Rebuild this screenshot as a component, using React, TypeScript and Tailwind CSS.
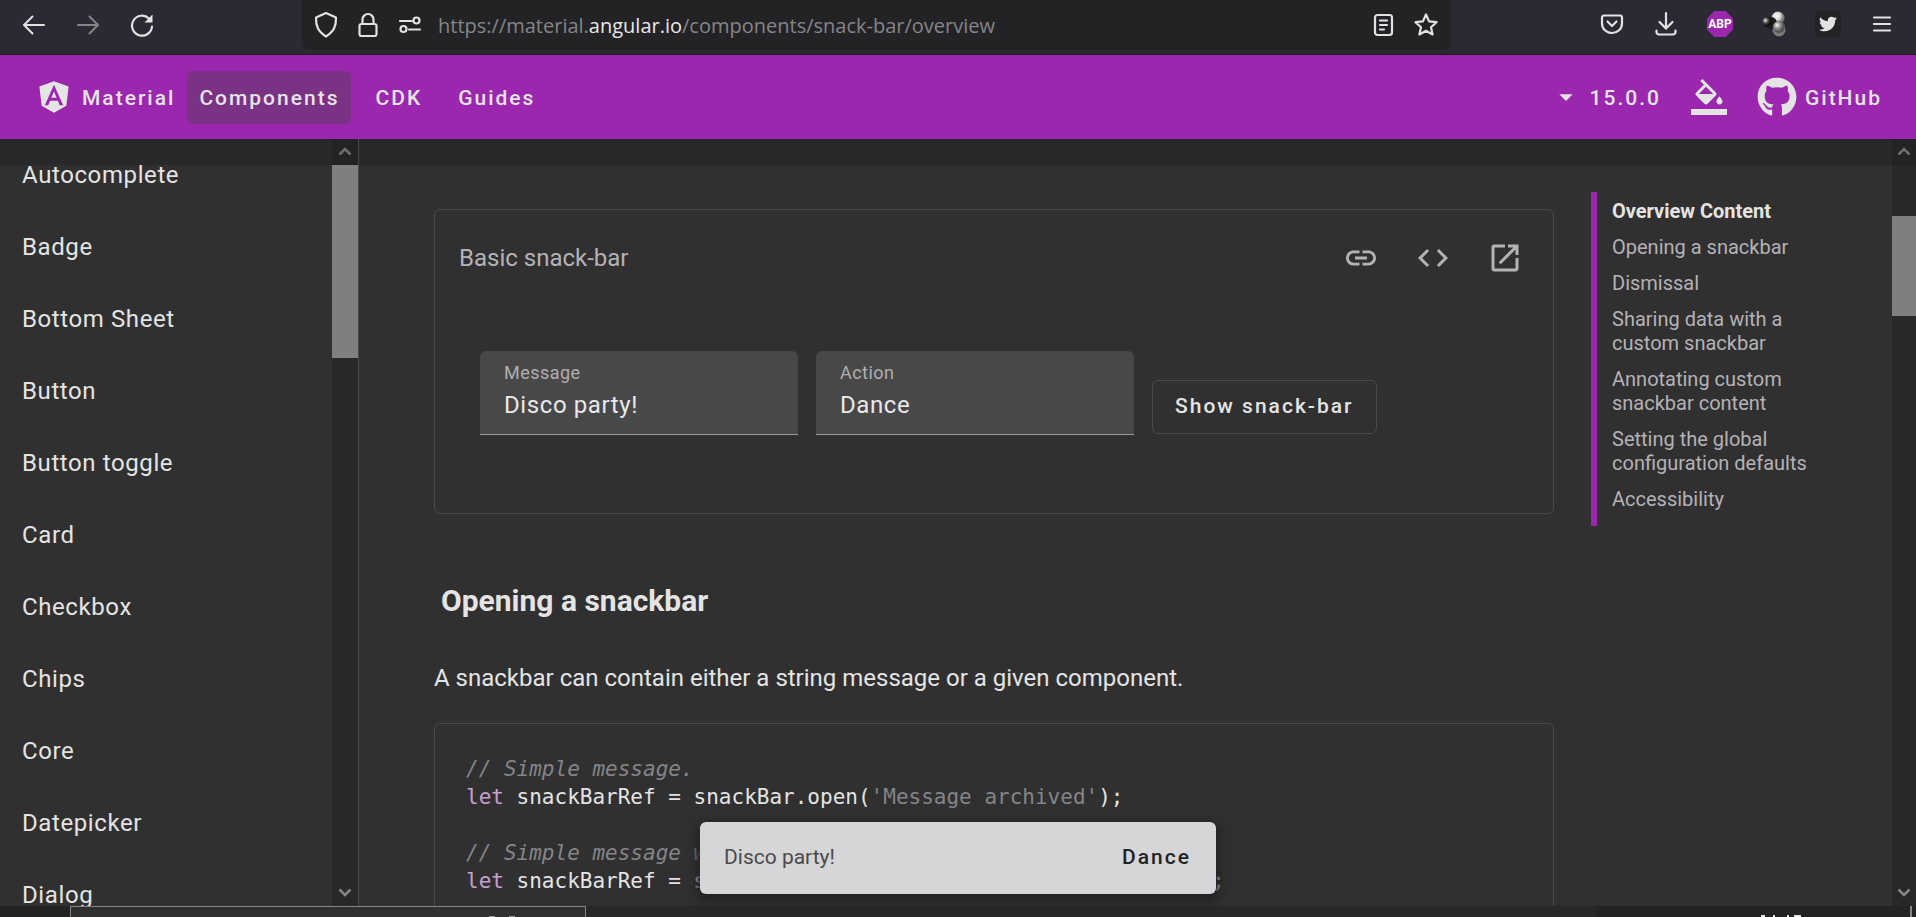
import { MdLink, MdCode, MdOpenInNew, MdArrowDropDown } from "react-icons/md";
import { FaAngular, FaGithub, FaTwitter } from "react-icons/fa";

const NAV_ITEMS = [
  "Autocomplete",
  "Badge",
  "Bottom Sheet",
  "Button",
  "Button toggle",
  "Card",
  "Checkbox",
  "Chips",
  "Core",
  "Datepicker",
  "Dialog",
];

const TOC_ITEMS = [
  "Opening a snackbar",
  "Dismissal",
  "Sharing data with a custom snackbar",
  "Annotating custom snackbar content",
  "Setting the global configuration defaults",
  "Accessibility",
];

const iconButton = "flex items-center justify-center";

function BrowserBar() {
  return (
    <div className="flex h-[55px] shrink-0 items-start border-b border-[#1c1c20] bg-[#2b2a33] text-[#e2e2e4]">
      <div className="flex h-[50px] w-[302px] shrink-0 items-center gap-[28px] pl-5">
        <button aria-label="Back" className={iconButton}>
          <svg width="26" height="26" viewBox="0 0 26 26" fill="none" stroke="currentColor" strokeWidth="2" strokeLinecap="round">
            <path d="M24 13H4M12.500 4.500 4 13l8.500 8.500" />
          </svg>
        </button>
        <button aria-label="Forward" className={iconButton + " text-[#858588]"}>
          <svg width="26" height="26" viewBox="0 0 26 26" fill="none" stroke="currentColor" strokeWidth="2" strokeLinecap="round">
            <path d="M4 13h20M15.500 4.500 24 13l-8.500 8.500" />
          </svg>
        </button>
        <button aria-label="Reload" className={iconButton}>
          <svg width="26" height="26" viewBox="0 0 26 26" fill="none" stroke="currentColor" strokeWidth="2.200" strokeLinecap="round">
            <path d="M24 14.500A10 10 0 1 1 21 6.500" />
            <path d="M24.500 2.500v8h-8z" fill="currentColor" stroke="none" />
          </svg>
        </button>
      </div>
      <div className="flex h-[50px] min-w-0 flex-1 items-center rounded-b-md bg-[#232326] px-3">
        <button aria-label="Tracking protection" className={iconButton}>
          <svg width="24" height="28" viewBox="0 0 24 28" fill="none" stroke="currentColor" strokeWidth="2.200" strokeLinejoin="round">
            <path d="M12 2l10 4.500c.3 8.500-2 14-10 19C4 20.500 1.700 15 2 6.500z" />
          </svg>
        </button>
        <button aria-label="Site security" className={iconButton + " ml-[18px]"}>
          <svg width="24" height="26" viewBox="0 0 24 26" fill="none" stroke="currentColor" strokeWidth="2.200">
            <rect x="3.500" y="12" width="17" height="12" rx="2" />
            <path d="M6.500 12V7.500a5.500 5.500 0 0 1 11 0V12" />
          </svg>
        </button>
        <button aria-label="Permissions" className={iconButton + " ml-[18px]"}>
          <svg width="24" height="20" viewBox="0 0 24 20" fill="none" stroke="currentColor" strokeWidth="2.200" strokeLinecap="round">
            <path d="M2 6h12M11 14.500h11" />
            <circle cx="18.500" cy="5.500" r="3" />
            <circle cx="5.500" cy="14" r="3" />
          </svg>
        </button>
        <span className="ml-4 flex-1 pt-0.5 font-['Open_Sans','Noto_Sans',sans-serif] text-[20px] whitespace-nowrap text-[#858588]">
          https://material.<span className="text-[#e8e8ea]">angular.io</span>/components/snack-bar/overview
        </span>
        <button aria-label="Reader view" className={iconButton}>
          <svg width="22" height="24" viewBox="0 0 22 24" fill="none" stroke="currentColor" strokeWidth="2.200" strokeLinecap="round">
            <rect x="2" y="2" width="17" height="20" rx="2.500" />
            <path d="M7 7.500h7M7 12h7M7 16.500h4" />
          </svg>
        </button>
        <button aria-label="Bookmark" className={iconButton + " ml-[18px]"}>
          <svg width="26" height="26" viewBox="0 0 26 26" fill="none" stroke="currentColor" strokeWidth="2.200" strokeLinejoin="round">
            <path d="M13 2.500l3.100 6.900 7.400.8-5.500 5 1.600 7.300L13 18.800l-6.600 3.700L8 15.200l-5.500-5 7.400-.8z" />
          </svg>
        </button>
      </div>
      <div className="flex h-12 w-[465px] shrink-0 items-center justify-end gap-[28px] pr-[21px]">
        <button aria-label="Pocket" className={iconButton}>
          <svg width="26" height="26" viewBox="0 0 26 26" fill="none" stroke="currentColor" strokeWidth="2.200" strokeLinecap="round" strokeLinejoin="round">
            <path d="M5 4.500h16a2 2 0 0 1 2 2v6a10 9.500 0 0 1-20 0v-6a2 2 0 0 1 2-2z" />
            <path d="M8.500 10.500l4.500 4.500 4.500-4.500" />
          </svg>
        </button>
        <button aria-label="Downloads" className={iconButton}>
          <svg width="26" height="26" viewBox="0 0 26 26" fill="none" stroke="currentColor" strokeWidth="2.200" strokeLinecap="round">
            <path d="M13 2v15M6.500 11l6.500 6.500 6.500-6.500M3.500 19.500v1.500a2.500 2.500 0 0 0 2.500 2.500h14a2.500 2.500 0 0 0 2.500-2.500v-1.500" />
          </svg>
        </button>
        <button
          aria-label="Adblock Plus"
          className="flex size-[26px] items-center justify-center bg-[#9b27af] font-['Roboto',sans-serif] text-[12px] font-bold text-white [clip-path:polygon(29%_0,71%_0,100%_29%,100%_71%,71%_100%,29%_100%,0_71%,0_29%)]"
        >
          ABP
        </button>
        <button aria-label="Extension" className={iconButton}>
          <svg width="26" height="26" viewBox="0 0 26 26">
            <defs>
              <radialGradient id="ballLight" cx=".4" cy=".35">
                <stop offset="0" stopColor="#fff" />
                <stop offset=".6" stopColor="#d5d5d5" />
                <stop offset="1" stopColor="#777" />
              </radialGradient>
              <radialGradient id="ballGray" cx=".35" cy=".35">
                <stop offset="0" stopColor="#fff" />
                <stop offset=".4" stopColor="#aaa" />
                <stop offset="1" stopColor="#555" />
              </radialGradient>
              <radialGradient id="ballDark" cx=".35" cy=".4">
                <stop offset="0" stopColor="#eee" />
                <stop offset=".5" stopColor="#555" />
                <stop offset="1" stopColor="#111" />
              </radialGradient>
            </defs>
            <circle cx="18" cy="19" r="6.500" fill="#7a7a7a" />
            <circle cx="17" cy="7" r="6.500" fill="url(#ballLight)" />
            <circle cx="10" cy="12" r="6" fill="#1c1c1f" />
            <circle cx="6" cy="10.500" r="5" fill="url(#ballDark)" />
            <circle cx="18" cy="16" r="6" fill="url(#ballGray)" />
          </svg>
        </button>
        <button aria-label="Twitter extension" className="flex size-[26px] items-center justify-center rounded bg-[#232326]">
          <FaTwitter size={18} />
        </button>
        <button aria-label="Menu" className={iconButton}>
          <svg width="26" height="26" viewBox="0 0 26 26" fill="none" stroke="currentColor" strokeWidth="2.200" strokeLinecap="round">
            <path d="M5 6.500h16M5 13h16M5 19.500h16" />
          </svg>
        </button>
      </div>
    </div>
  );
}

function SiteHeader() {
  const link = "flex h-[53px] items-center rounded-md px-3 pt-1";
  return (
    <header className="flex h-[84px] shrink-0 items-center bg-[#9b27af] text-[21px] font-medium tracking-[2px] whitespace-nowrap text-[#e4e4e4]">
      <nav className="flex items-center pl-9">
        <a href="#material" className="flex items-center gap-2.5 pr-3">
          <FaAngular size={36} />
          <span className="pt-1">Material</span>
        </a>
        <a href="#components" className={link + " bg-[#7a3284]"}>
          Components
        </a>
        <a href="#cdk" className={link + " ml-3"}>
          CDK
        </a>
        <a href="#guides" className={link + " ml-3"}>
          Guides
        </a>
      </nav>
      <div className="ml-auto flex items-center pr-[34px]">
        <button className="flex items-center gap-2">
          <MdArrowDropDown size={32} />
          <span className="pt-1">15.0.0</span>
        </button>
        <button aria-label="Select a theme" className="ml-[30px]">
          <svg width="36" height="36" viewBox="0 0 24 24" fill="currentColor">
            <path d="M16.560 8.940L7.620 0 6.210 1.410l2.380 2.380-5.150 5.150c-.590.590-.590 1.540 0 2.120l5.500 5.500c.290.290.680.440 1.060.440s.770-.150 1.060-.440l5.500-5.500c.590-.580.590-1.530 0-2.120zM5.210 10L10 5.210 14.790 10H5.210zM19 11.500s-2 2.170-2 3.500c0 1.100.9 2 2 2s2-.9 2-2c0-1.330-2-3.500-2-3.500z" />
            <path d="M0 20h24v4H0z" />
          </svg>
        </button>
        <a href="#github" className="ml-[30px] flex items-center gap-2">
          <FaGithub size={40} />
          <span className="pt-1">GitHub</span>
        </a>
      </div>
    </header>
  );
}

function Chevron({ up = false }: { up?: boolean }) {
  return (
    <svg width="14" height="10" viewBox="0 0 14 10" fill="none" stroke={up ? "#6e6e70" : "#858585"} strokeWidth="2.500">
      <path d={up ? "M1.500 7.500 7 2l5.500 5.500" : "M1.500 1.500 7 7l5.500-5.500"} />
    </svg>
  );
}

function Field({ id, label, value }: { id: string; label: string; value: string }) {
  return (
    <div className="flex h-[84px] w-[318px] flex-col rounded-t-md border-b border-[#999] bg-[#484848] px-6 pt-2.5">
      <label htmlFor={id} className="text-[18px] leading-6 tracking-wide text-[#b0aeb0]">
        {label}
      </label>
      <input
        id={id}
        defaultValue={value}
        className="h-10 w-full bg-transparent text-[24px] tracking-wide text-[#e8e8e8] outline-none"
      />
    </div>
  );
}

export default function App() {
  return (
    <div className="relative flex h-screen flex-col overflow-hidden bg-[#303030] font-['Roboto',sans-serif] text-[#e4e4e4]">
      <BrowserBar />
      <SiteHeader />

      <div className="flex min-h-0 flex-1 bg-linear-to-b from-[#28282a] from-[26px] to-[#303030] to-[26px]">
        <nav aria-label="Components" className="min-w-0 flex-[0_0_332px] overflow-hidden">
          <ul>
            {NAV_ITEMS.map((item) => (
              <li key={item}>
                <a href="#item" className="flex h-[72px] items-center pl-[22px] text-[24px] tracking-wide">
                  {item}
                </a>
              </li>
            ))}
          </ul>
        </nav>
        <div className="flex w-[27px] shrink-0 flex-col items-center border-r border-[#4a4a4e] bg-[#28282b]">
          <div className="flex h-[26px] w-full items-center justify-center bg-[#232326]">
            <Chevron up />
          </div>
          <div className="h-[193px] w-full bg-[#7f807d]" />
          <div className="mt-auto flex h-[26px] items-center">
            <Chevron />
          </div>
        </div>

        <main className="min-w-0 flex-1 overflow-hidden pt-[70px] pr-[37px] pl-[75px]">
          <section className="h-[305px] rounded-md border border-[#4a4a4a]">
            <div className="flex h-24 items-center justify-between pr-[30px] pl-6 text-[#b5b2b6]">
              <h3 className="text-[24px]">Basic snack-bar</h3>
              <div className="flex gap-9">
                <button aria-label="Copy link">
                  <MdLink size={36} />
                </button>
                <button aria-label="View code">
                  <MdCode size={36} />
                </button>
                <button aria-label="Open in StackBlitz">
                  <MdOpenInNew size={36} />
                </button>
              </div>
            </div>
            <div className="flex items-end gap-[18px] pt-[45px] pl-[45px]">
              <Field id="message" label="Message" value="Disco party!" />
              <Field id="action" label="Action" value="Dance" />
              <button className="mb-px h-[54px] rounded-md border border-[#4a4a4a] px-[22px] text-[21px] font-medium tracking-[2px] whitespace-nowrap">
                Show snack-bar
              </button>
            </div>
          </section>
          <h3 className="mt-[67px] pl-[7px] text-[30px] leading-10 font-bold">Opening a snackbar</h3>
          <p className="mt-[39px] text-[24px] leading-9">A snackbar can contain either a string message or a given component.</p>
          <pre className="mt-[27px] h-[300px] overflow-hidden rounded-md border border-[#4a4a4a] px-[31px] py-[31px] font-['DejaVu_Sans_Mono',monospace] text-[21px] leading-7">
            <i className="text-[#858588]">{"// Simple message."}</i>
            {"\n"}
            <span className="text-[#c9a0d0]">let</span>
            {" snackBarRef = snackBar.open("}
            <span className="text-[#858588]">{"'Message archived'"}</span>
            {");\n\n"}
            <i className="text-[#858588]">{"// Simple message with an action."}</i>
            {"\n"}
            <span className="text-[#c9a0d0]">let</span>
            {" snackBarRef = snackBar.open("}
            <span className="text-[#858588]">{"'Message archived'"}</span>
            {", "}
            <span className="text-[#858588]">{"'Undo'"}</span>
            {");"}
          </pre>
        </main>

        <aside className="w-[301px] shrink-0 pt-[53px]">
          <div className="border-l-6 border-[#9b27af] pt-[7px] pb-[15px] pl-[15px] text-[20px] leading-6">
            <h2 className="font-bold">Overview Content</h2>
            <ul className="w-[210px] text-[#b5b2b6]">
              {TOC_ITEMS.map((item) => (
                <li key={item} className="pt-3">
                  <a href="#section">{item}</a>
                </li>
              ))}
            </ul>
          </div>
        </aside>
        <div className="flex w-6 shrink-0 flex-col items-center bg-[#28282b]">
          <div className="flex h-[26px] w-full items-center justify-center bg-[#232326]">
            <Chevron up />
          </div>
          <div className="mt-[51px] h-[100px] w-full bg-[#7f807d]" />
          <div className="mt-auto flex h-[26px] items-center">
            <Chevron />
          </div>
        </div>
      </div>

      <div className="flex h-[11px] shrink-0 bg-[#232326] pl-[70px]">
        <div className="flex w-[516px] items-end justify-end gap-3.5 border border-b-0 border-[#858585] bg-[#303030] pr-[70px]">
          <div className="h-px w-1.5 bg-[#999]" />
          <div className="h-px w-1.5 bg-[#999]" />
        </div>
        <div className="flex-1 bg-[#28282b]" />
        <div className="flex w-[314px] items-end justify-end bg-[#232326] pr-[108px]">
          <svg width="42" height="2" viewBox="0 0 42 2" fill="#e4e4e4">
            <path d="M1 0h4v2H1zM13 0h2v2h-2zM27 0h2v2h-2zM34 0h7v2h-7z" />
          </svg>
        </div>
        <div className="mr-1 w-0.5 bg-[#858585]" />
      </div>

      <div
        role="status"
        className="absolute bottom-[23px] left-1/2 flex h-[72px] w-[516px] -translate-x-1/2 items-center justify-between rounded-md bg-[#d6d6d8] pr-[25px] pl-6 text-[21px] text-[#4a4a4a] shadow-[0_4px_8px_4px_#242427]"
      >
        Disco party!
        <button className="font-medium tracking-[2px] text-[#232326]">Dance</button>
      </div>
    </div>
  );
}
